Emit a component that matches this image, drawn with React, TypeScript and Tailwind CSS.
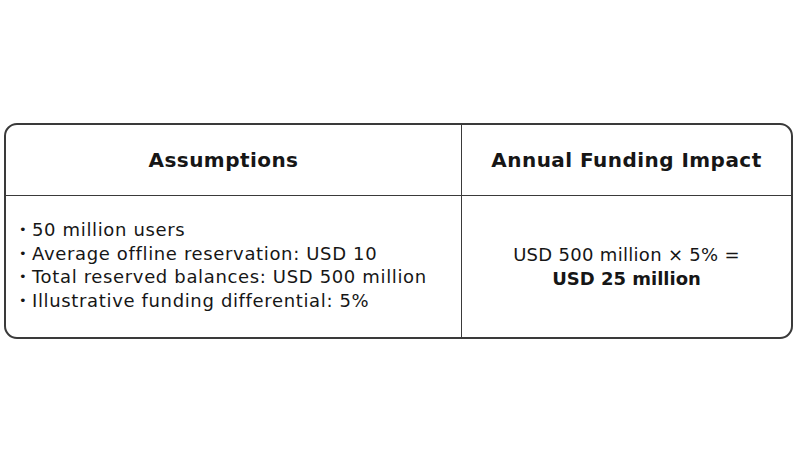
export default function App() {
  const items = [
    "50 million users",
    "Average offline reservation: USD 10",
    "Total reserved balances: USD 500 million",
    "Illustrative funding differential: 5%",
  ];

  return (
    <div
      className="w-[800px] h-[450px] bg-white pt-[123px] pl-[4px] text-[#161616]"
      style={{ fontFamily: "'DejaVu Sans', sans-serif" }}
    >
      <div className="w-[789px] h-[216px] rounded-[13px] border-2 border-[#3a3a3a] grid grid-cols-[456px_1fr] grid-rows-[71px_1fr] overflow-hidden">
        <div className="border-r-[1.5px] border-b-[1.5px] border-[#3a3a3a] flex items-center justify-center pr-[20px]">
          <span className="text-[20px] font-bold tracking-[0.45px]">Assumptions</span>
        </div>
        <div className="border-b-[1.5px] border-[#3a3a3a] flex items-center justify-center">
          <span className="text-[20px] font-bold tracking-[0.45px]">Annual Funding Impact</span>
        </div>
        <div className="border-r-[1.5px] border-[#3a3a3a] pl-[13px] pt-[22px]">
          <ul className="text-[18px] leading-[23.5px] tracking-[0.65px]">
            {items.map((t) => (
              <li key={t} className="flex">
                <span className="w-[13px] text-[13px]">•</span>
                <span>{t}</span>
              </li>
            ))}
          </ul>
        </div>
        <div className="flex flex-col items-center pt-[47px] text-[18px] leading-[24px]">
          <span className="tracking-[0.3px]">USD 500 million × 5% =</span>
          <span className="font-bold">USD 25 million</span>
        </div>
      </div>
    </div>
  );
}
